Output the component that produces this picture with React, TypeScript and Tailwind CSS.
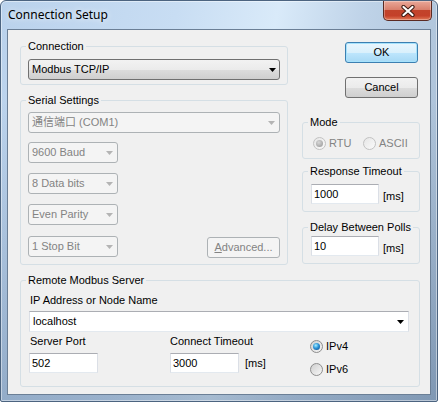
import React from 'react';

function Arrow({ color = '#000' }: { color?: string }) {
  return (
    <svg width="7" height="4" viewBox="0 0 7 4" className="shrink-0">
      <path d="M0 0 H7 L3.5 4 Z" fill={color} />
    </svg>
  );
}

function Combo({ value, className = '', disabled = false }: { value: string; className?: string; disabled?: boolean }) {
  if (disabled) {
    return (
      <div className={`flex h-[21px] items-center justify-between rounded-[3px] border border-[#adb2b5] bg-[#f4f4f4] pl-[3px] pr-[4px] text-[#838383] ${className}`}>
        <span>{value}</span>
        <Arrow color="#b4b4b4" />
      </div>
    );
  }
  return (
    <div className={`flex h-[21px] items-center justify-between rounded-[3px] border border-[#707070] bg-[linear-gradient(to_bottom,#f2f2f2_0%,#ebebeb_50%,#dddddd_51%,#cfcfcf_100%)] pl-[3px] pr-[3px] ${className}`}>
      <span>{value}</span>
      <Arrow />
    </div>
  );
}

function TextBox({ value, className = 'w-[68px]' }: { value: string; className?: string }) {
  return (
    <div className={`flex h-[20px] items-center border border-t-[#abadb3] border-x-[#dbdfe6] border-b-[#e3e9ef] bg-white pl-[2px] ${className}`}>
      {value}
    </div>
  );
}

function Radio({ checked = false, disabled = false }: { checked?: boolean; disabled?: boolean }) {
  if (disabled) {
    return (
      <span className="flex h-[13px] w-[13px] shrink-0 items-center justify-center rounded-full border border-[#c2c2c2] bg-[linear-gradient(135deg,#e6e6e6,#fafafa)]">
        {checked && <span className="h-[7px] w-[7px] rounded-full bg-[radial-gradient(circle_at_40%_35%,#d8d8d8,#a8a8a8_70%)]" />}
      </span>
    );
  }
  return (
    <span className="flex h-[13px] w-[13px] shrink-0 items-center justify-center rounded-full border border-[#8d8d8d] bg-[linear-gradient(135deg,#cfcfcf,#f7f7f7)]">
      {checked && <span className="h-[7px] w-[7px] rounded-full bg-[radial-gradient(circle_at_40%_35%,#a8efff,#2b94d8_45%,#0c3f7e_100%)]" />}
    </span>
  );
}

// group box: the label sits on the top border, body gets its own padding
function GroupBox({ label, className = '', bodyClassName = '', children }: { label: string; className?: string; bodyClassName?: string; children: React.ReactNode }) {
  return (
    <div className={`rounded-[3px] border border-[#d5dfe5] ${className}`}>
      <div className="-mt-[7px] ml-[5px] w-fit whitespace-nowrap bg-[#f0f0f0] px-[2px] leading-[13px]">{label}</div>
      <div className={bodyClassName}>{children}</div>
    </div>
  );
}

function Button({ label, primary = false, disabled = false, className = '' }: { label: React.ReactNode; primary?: boolean; disabled?: boolean; className?: string }) {
  const look = disabled
    ? 'border-[#adb2b5] bg-[#f4f4f4] text-[#838383]'
    : primary
      ? 'border-[#3c7fb1] bg-[linear-gradient(to_bottom,#eaf6fd_0%,#d9f0fc_50%,#bee6fd_51%,#a7d9f5_100%)] shadow-[inset_0_0_0_1px_#a6e2fc]'
      : 'border-[#707070] bg-[linear-gradient(to_bottom,#f2f2f2_0%,#ebebeb_50%,#dddddd_51%,#cfcfcf_100%)]';
  return (
    <div className={`flex h-[21px] w-[73px] items-center justify-center rounded-[3px] border ${look} ${className}`}>
      {label}
    </div>
  );
}

export default function App() {
  return (
    <div className="flex h-[402px] w-[438px] flex-col rounded-t-[6px] rounded-b-[2px] border border-[#4c6480] bg-[linear-gradient(to_bottom,rgba(0,0,0,0)_0%,rgba(0,0,0,0)_25%,rgba(30,60,100,0.28)_100%),linear-gradient(100deg,#bad2ec_0%,#c8ddf3_35%,#d9eaf9_55%,#bfd3e8_72%,#a5bbd2_100%)] font-['Liberation_Sans','Noto_Sans_CJK_SC',sans-serif] text-[11px] leading-[13px] text-black shadow-[inset_0_0_0_1px_rgba(255,255,255,0.45)]">
      {/* title bar */}
      <div className="flex h-[28px] items-start justify-between">
        <div className="ml-[7px] mt-[6px] font-['Noto_Sans',sans-serif] text-[12px] leading-[16px] [text-shadow:0_0_6px_#fff]">
          Connection Setup
        </div>
        <div className="mr-[5px] flex h-[20px] w-[49px] items-center justify-center rounded-b-[5px] border border-t-0 border-[#5b2a22] bg-[linear-gradient(to_bottom,#e9a899_0%,#d9806d_45%,#c2432b_50%,#c4412a_78%,#e27a58_100%)] shadow-[inset_0_0_0_1px_rgba(255,255,255,0.3)]">
          <svg width="14" height="12" viewBox="0 0 14 12">
            <path d="M2.5 2 L11.5 10 M11.5 2 L2.5 10" stroke="#3d1a12" strokeWidth="4.2" strokeLinecap="round" />
            <path d="M2.5 2 L11.5 10 M11.5 2 L2.5 10" stroke="#ffffff" strokeWidth="2.2" strokeLinecap="round" />
          </svg>
        </div>
      </div>

      {/* client area */}
      <div className="mx-[6px] h-[366px] border border-[#6b7f96] bg-[#f0f0f0] pl-[12px] pr-[10px]">
        <div className="flex items-start gap-[14px]">
          {/* left column */}
          <div className="w-[268px] pt-[16px]">
            <GroupBox label="Connection" bodyClassName="pl-[7px] pr-[6px] pb-[4px]">
              <Combo value="Modbus TCP/IP" className="mt-[6px] w-[252px]" />
            </GroupBox>

            <GroupBox label="Serial Settings" className="mt-[15px]" bodyClassName="pl-[7px] pr-[6px] pb-[6px]">
              <Combo value="通信端口 (COM1)" disabled className="mt-[5px] w-[252px]" />
              <Combo value="9600 Baud" disabled className="mt-[9px] w-[90px]" />
              <Combo value="8 Data bits" disabled className="mt-[10px] w-[90px]" />
              <Combo value="Even Parity" disabled className="mt-[10px] w-[90px]" />
              <div className="mt-[10px] flex items-center justify-between">
                <Combo value="1 Stop Bit" disabled className="w-[90px]" />
                <Button
                  disabled
                  className="mr-[1px] mt-[2px]"
                  label={
                    <span>
                      <span className="underline">A</span>dvanced...
                    </span>
                  }
                />
              </div>
            </GroupBox>
          </div>

          {/* right column */}
          <div className="w-[118px] pt-[12px]">
            <div className="flex flex-col items-end pr-[2px]">
              <Button label="OK" primary />
              <Button label="Cancel" className="mt-[14px]" />
            </div>

            <GroupBox label="Mode" className="mt-[24px]" bodyClassName="pl-[10px] pb-[8px]">
              <div className="mt-[8px] flex items-center text-[#838383]">
                <div className="flex w-[50px] items-center gap-[3px]">
                  <Radio checked disabled />
                  <span>RTU</span>
                </div>
                <div className="flex items-center gap-[3px]">
                  <Radio disabled />
                  <span>ASCII</span>
                </div>
              </div>
            </GroupBox>

            <GroupBox label="Response Timeout" className="mt-[12px]" bodyClassName="pl-[8px] pb-[7px]">
              <div className="mt-[6px] flex items-end gap-[4px]">
                <TextBox value="1000" />
                <span className="pb-[1px]">[ms]</span>
              </div>
            </GroupBox>

            <GroupBox label="Delay Between Polls" className="mt-[15px]" bodyClassName="pl-[8px] pb-[7px]">
              <div className="mt-[2px] flex items-end gap-[4px]">
                <TextBox value="10" />
                <span className="pb-[1px]">[ms]</span>
              </div>
            </GroupBox>
          </div>
        </div>

        {/* remote server */}
        <GroupBox label="Remote Modbus Server" className="mt-[15px]" bodyClassName="pl-[8px] pb-[10px]">
          <div className="mt-[7px] pl-[1px]">IP Address or Node Name</div>
          <div className="mt-[4px] flex h-[21px] w-[380px] items-center justify-between border border-t-[#abadb3] border-x-[#dbdfe6] border-b-[#e3e9ef] bg-white pl-[3px] pr-[4px]">
            <span>localhost</span>
            <Arrow />
          </div>
          <div className="mt-[3px] grid grid-cols-[141px_140px_1fr]">
            <div>
              <div className="pl-[1px]">Server Port</div>
              <TextBox value="502" className="mt-[5px] w-[69px]" />
            </div>
            <div>
              <div>Connect Timeout</div>
              <div className="mt-[5px] flex items-center gap-[6px]">
                <TextBox value="3000" className="w-[69px]" />
                <span className="pt-[1px]">[ms]</span>
              </div>
            </div>
            <div className="flex flex-col gap-[10px] pt-[5px]">
              <div className="flex items-center gap-[3px]">
                <Radio checked />
                <span>IPv4</span>
              </div>
              <div className="flex items-center gap-[3px]">
                <Radio />
                <span>IPv6</span>
              </div>
            </div>
          </div>
        </GroupBox>
      </div>
    </div>
  );
}
